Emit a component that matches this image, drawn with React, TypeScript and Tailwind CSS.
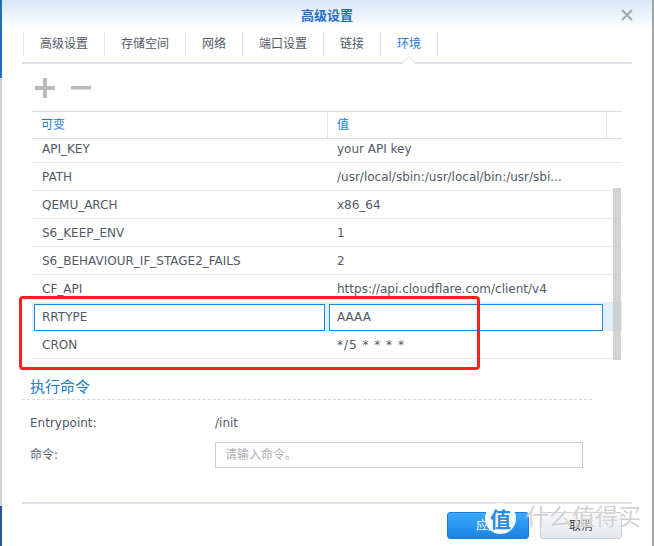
import React from "react";

const rows: [string, string][] = [
  ["API_KEY", "your API key"],
  ["PATH", "/usr/local/sbin:/usr/local/bin:/usr/sbi..."],
  ["QEMU_ARCH", "x86_64"],
  ["S6_KEEP_ENV", "1"],
  ["S6_BEHAVIOUR_IF_STAGE2_FAILS", "2"],
  ["CF_API", "https://api.cloudflare.com/client/v4"],
];

const tabs = ["高级设置", "存储空间", "网络", "端口设置", "链接", "环境"];

export default function App() {
  return (
    <div className="relative flex w-[654px] h-[546px] overflow-hidden bg-white text-[12px] text-[#4f5a66] font-['DejaVu_Sans','Noto_Sans_CJK_SC',sans-serif]">
      {/* left background strip */}
      <div className="w-[2px] shrink-0 flex flex-col">
        <div className="h-[78px] bg-[#1b6fc2]" />
        <div className="flex-1 bg-[#cfd2d5]" />
        <div className="h-[40px] bg-[#2456a8]" />
      </div>

      {/* dialog */}
      <div className="flex-1 flex flex-col bg-white min-w-0">
        {/* title bar */}
        <div className="h-[30px] shrink-0 grid grid-cols-[1fr_auto_1fr] items-center px-[19px] bg-linear-to-b from-[#d9e7f7] to-white">
          <div />
          <div className="text-[13px] font-bold text-[#1f70c8] leading-none">高级设置</div>
          <div className="justify-self-end flex items-center">
            <svg width="12" height="12" viewBox="0 0 12 12">
              <path d="M1 1L11 11M11 1L1 11" stroke="#9fa5ac" strokeWidth="1.8" />
            </svg>
          </div>
        </div>

        {/* tabs */}
        <div className="mx-[20px] mt-[2px] pb-[6px] border-b-2 border-[#dcdfe3] flex pl-[1px]">
          {tabs.map((t, i) => {
            const active = i === tabs.length - 1;
            return (
              <div
                key={t}
                className={
                  "relative h-[24px] px-4 flex items-center border-l border-[#dfe3e8] text-[12px] " +
                  (active ? "border-r text-[#1a7ad6]" : "text-[#4f5a66]")
                }
              >
                {t}
                {active && (
                  <svg
                    className="absolute left-1/2 -translate-x-1/2 top-[23px]"
                    width="14"
                    height="9"
                    viewBox="0 0 14 9"
                  >
                    <polygon points="0,9 7,1.5 14,9" fill="#fff" />
                    <path d="M0 8.5L7 1.5L14 8.5" fill="none" stroke="#d2d6db" strokeWidth="1" />
                  </svg>
                )}
              </div>
            );
          })}
        </div>

        {/* toolbar */}
        <div className="h-[47px] shrink-0 flex items-center gap-[16px] pl-[33px]">
          <svg width="20" height="20" viewBox="0 0 20 20">
            <rect x="8" y="0" width="4" height="20" fill="#b7babe" />
            <rect x="0" y="8" width="20" height="4" fill="#b7babe" />
          </svg>
          <svg width="20" height="20" viewBox="0 0 20 20">
            <rect x="0" y="8" width="20" height="3.5" fill="#b7babe" />
          </svg>
        </div>

        {/* table */}
        <div className="mx-[30px] shrink-0">
          <div className="h-[28px] flex border-t border-b border-[#d9dfe6] text-[#1a7ad6]">
            <div className="w-[295px] pl-[9px] flex items-center">可变</div>
            <div className="w-[279px] pl-[9px] flex items-center border-l border-[#dde3ea]">值</div>
            <div className="flex-1 border-l border-[#dde3ea]" />
          </div>
          <div className="relative h-[221px] overflow-hidden">
            <div className="mt-[-4px]">
              {rows.map(([k, v]) => (
                <div key={k} className="h-[28px] flex items-center border-b border-[#e6eaef]">
                  <div className="w-[295px] pl-[10px] whitespace-nowrap">{k}</div>
                  <div className="pl-[10px] whitespace-nowrap">{v}</div>
                </div>
              ))}
              <div className="h-[28px] flex items-center bg-[#e2effb]">
                <div className="ml-[2px] w-[291px] h-[27px] border border-[#1d87e4] bg-white pl-[7px] flex items-center">
                  RRTYPE
                </div>
                <div className="ml-[4px] w-[274px] h-[27px] border border-[#1d87e4] bg-white pl-[7px] flex items-center">
                  AAAA
                </div>
              </div>
              <div className="h-[28px] flex items-center border-b border-[#e6eaef]">
                <div className="w-[295px] pl-[10px]">CRON</div>
                <div className="pl-[10px] tracking-[1px]">*/5 * * * *</div>
              </div>
            </div>
            <div className="absolute right-[1px] top-[49px] w-[8px] h-[172px] bg-[#c4c4c4]/75" />
          </div>
        </div>

        {/* command section */}
        <div className="mx-[20px] w-[570px] mt-[17px] pb-[2px] pl-[8px] border-b border-dashed border-[#d2d6db] text-[15px] leading-[20px] text-[#1a7ad6]">
          执行命令
        </div>
        <div className="mx-[20px] pl-[8px] mt-[10px] h-[26px] flex items-center">
          <div className="w-[185px]">Entrypoint:</div>
          <div>/init</div>
        </div>
        <div className="mx-[20px] pl-[8px] mt-[6px] h-[26px] flex items-center">
          <div className="w-[185px]">命令:</div>
          <input
            className="w-[368px] h-[26px] border border-[#c7cdd7] pl-[9px] text-[12px] outline-none placeholder:text-[#a9afb7]"
            placeholder="请输入命令。"
          />
        </div>

        {/* footer */}
        <div className="mx-[20px] mt-[34px] border-t-2 border-[#dcdfe3]" />
        <div className="mx-[20px] mt-[8px] flex justify-end gap-[11px] pr-[10px]">
          <button className="w-[82px] h-[27px] rounded-[3px] border border-[#1a7ad6] bg-linear-to-b from-[#3aa9f9] to-[#1883e4] text-white text-[12px]">
            应用
          </button>
          <button className="w-[82px] h-[27px] rounded-[3px] border border-[#c8ced5] bg-linear-to-b from-[#f6f8fa] to-[#e4e8ec] text-[#333] text-[12px]">
            取消
          </button>
        </div>
      </div>

      {/* right background strip */}
      <div className="w-[2px] shrink-0 bg-[#9ea3a8]" />

      {/* annotation box */}
      <div className="absolute left-[19px] top-[296px] w-[461px] h-[74px] border-[3px] border-[#ff1f1f] rounded-[4px]" />

      {/* watermark */}
      <div className="absolute left-[485px] top-[503px] w-[31px] h-[31px] rounded-full bg-white/95 flex items-center justify-center text-[21px] font-bold leading-none text-[#2a8ce4] font-['Noto_Sans_CJK_SC',sans-serif]">
        值
      </div>
      <div className="absolute left-[526px] top-[500px] text-[23px] leading-[30px] text-[#d2d2d2] [text-shadow:0_0_2px_#ffffff] font-['Noto_Sans_CJK_SC',sans-serif]">
        什么值得买
      </div>
    </div>
  );
}
